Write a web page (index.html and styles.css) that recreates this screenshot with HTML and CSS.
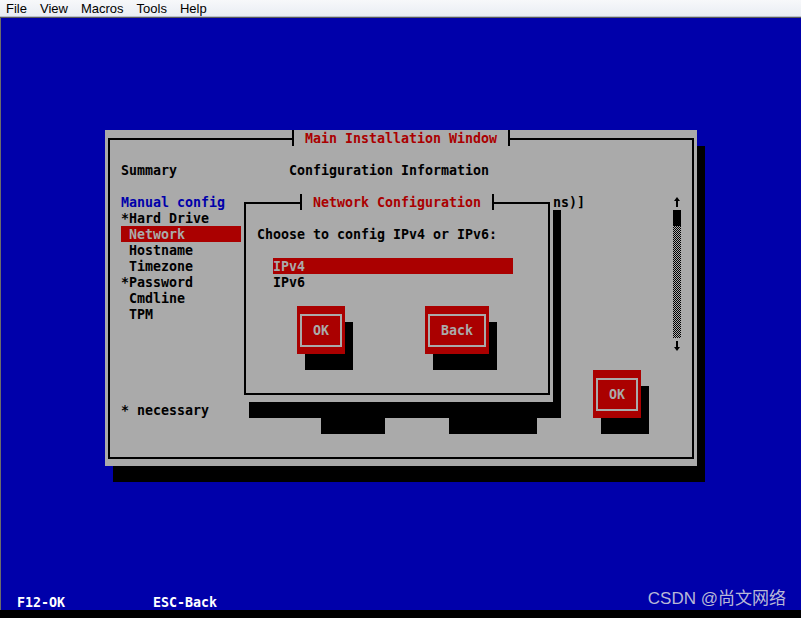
FILE: index.html
```html
<!DOCTYPE html>
<html lang="en">
<head>
    <meta charset="UTF-8">
    <meta name="viewport" content="width=device-width, initial-scale=1.0">
    <title>Main Installation Window</title>
    <link rel="stylesheet" href="styles.css">
</head>
<body>

<div class="menubar">
    <span>File</span>
    <span>View</span>
    <span>Macros</span>
    <span>Tools</span>
    <span>Help</span>
</div>

<div class="screen">
    <div class="win-shadow"></div>
    <div class="win">
        <div class="frame"></div>
        <div class="title win-title">Main Installation Window</div>

        <div class="txt summary">Summary</div>
        <div class="txt info">Configuration Information</div>

        <div class="sidebar">
            <div class="manual">Manual config</div>
            <div>*Hard Drive</div>
            <div class="sel"> Network</div>
            <div> Hostname</div>
            <div> Timezone</div>
            <div>*Password</div>
            <div> Cmdline</div>
            <div> TPM</div>
        </div>

        <div class="txt hint">ns)]</div>
        <div class="txt necessary">* necessary</div>

        <div class="scrollbar">
            <svg class="arrow" width="8" height="16" viewBox="0 0 8 16"><polygon points="4,3 7,7 1,7"/><rect x="3" y="6" width="2" height="7"/></svg>
            <div class="thumb"></div>
            <div class="track"></div>
            <svg class="arrow" width="8" height="16" viewBox="0 0 8 16"><rect x="3" y="3" width="2" height="7"/><polygon points="1,9 7,9 4,13"/></svg>
        </div>

        <!-- buttons hidden under the dialog, only their shadows show -->
        <div class="shadow hid-a"></div>
        <div class="shadow hid-b"></div>

        <div class="shadow ok-main-shadow"></div>
        <div class="btn ok-main"><span class="btn-frame">OK</span></div>
    </div>

    <div class="dlg-shadow"></div>
    <div class="dlg">
        <div class="frame"></div>
        <div class="title dlg-title">Network Configuration</div>
        <div class="txt choose">Choose to config IPv4 or IPv6:</div>
        <div class="txt opt v4">IPv4</div>
        <div class="txt opt v6">IPv6</div>

        <div class="shadow ok-shadow"></div>
        <div class="btn ok"><span class="btn-frame">OK</span></div>
        <div class="shadow back-shadow"></div>
        <div class="btn back"><span class="btn-frame">Back</span></div>
    </div>

    <div class="key f12">F12-OK</div>
    <div class="key esc">ESC-Back</div>

    <div class="watermark">CSDN @尚文网络</div>
</div>
<div class="bottom-strip"></div>

</body>
</html>
```

FILE: styles.css
```css
body {
    margin: 0;
    background-color: #6b6b6b;
    overflow: hidden;
}
.menubar {
    height: 16px;
    display: flex;
    align-items: center;
    gap: 13px;
    padding-left: 6px;
    background: linear-gradient(#f7f8fa, #e9edf3);
    border-bottom: 1px solid #b9c0cc;
    box-shadow: 0 1px 0 #5a5a5a;
    margin-bottom: 1px;
    font-family: "Liberation Sans", Arial, sans-serif;
    font-size: 13px;
    color: #000;
}

/* text console: 100 x 37 cells of 8x16 */
.screen {
    position: relative;
    margin-left: 1px;
    display: grid;
    grid-template-columns: repeat(100, 8px);
    grid-template-rows: repeat(37, 16px);
    background-color: #0000aa;
    font-family: "DejaVu Sans Mono", "Liberation Mono", monospace;
    font-size: 13.29px;
    font-weight: bold;
    line-height: 16px;
    color: #000;
}
.txt, .title, .key, .sidebar > div {
    white-space: pre;
    padding-top: 1px;
    line-height: 15px;
}
.bottom-strip {
    height: 8px;
    background-color: #000;
}

.win-shadow {
    grid-column: 15 / span 74;
    grid-row: 9 / span 21;
    background-color: #000;
}
.win {
    grid-column: 14 / span 74;
    grid-row: 8 / span 21;
    display: grid;
    grid-template-columns: repeat(74, 8px);
    grid-template-rows: repeat(21, 16px);
    background-color: #aaaaaa;
}
.frame {
    grid-area: 1 / 1 / -1 / -1;
    margin: 8px 3px 7px 3px;
    border: 2px solid #000;
}
.title {
    grid-row: 1;
    margin: 0 3px;
    padding-left: 11px;
    border-left: 2px solid #000;
    border-right: 2px solid #000;
    background-color: #aaaaaa;
    color: #aa0000;
}
.win-title { grid-column: 24 / span 28; }

.summary { grid-column: 3; grid-row: 3; }
.info { grid-column: 24; grid-row: 3; }
.hint { grid-column: 57; grid-row: 5; }
.necessary { grid-column: 3; grid-row: 18; }

.sidebar {
    grid-column: 3 / span 15;
    grid-row: 5 / span 8;
}
.sidebar .manual { color: #0000aa; }
.sidebar .sel {
    width: 120px;
    background-color: #aa0000;
    color: #aaaaaa;
}

.scrollbar {
    grid-column: 72;
    grid-row: 5 / span 10;
    display: flex;
    flex-direction: column;
}
.scrollbar .arrow {
    display: block;
    fill: #000;
}
.scrollbar .thumb {
    height: 16px;
    background-color: #000;
}
.scrollbar .track {
    height: 112px;
    background: repeating-conic-gradient(#000 0 25%, #aaaaaa 0 50%) 0 0 / 2px 2px;
}

.shadow { background-color: #000; }
.hid-a { grid-column: 28 / span 8; grid-row: 17 / span 3; }
.hid-b { grid-column: 44 / span 11; grid-row: 17 / span 3; }
.ok-main-shadow { grid-column: 63 / span 6; grid-row: 17 / span 3; }
.ok-main { grid-column: 62 / span 6; grid-row: 16 / span 3; }

.btn {
    display: flex;
    background-color: #aa0000;
    color: #aaaaaa;
}
.btn-frame {
    flex: 1;
    display: flex;
    align-items: center;
    justify-content: center;
    margin: 8px 3px 7px 3px;
    border: 2px solid #aaaaaa;
}

.dlg-shadow {
    grid-column: 32 / span 39;
    grid-row: 13 / span 13;
    background-color: #000;
}
.dlg {
    grid-column: 31 / span 39;
    grid-row: 12 / span 13;
    display: grid;
    grid-template-columns: repeat(39, 8px);
    grid-template-rows: repeat(13, 16px);
    background-color: #aaaaaa;
}
.dlg-title { grid-column: 8 / span 25; }
.choose { grid-column: 3; grid-row: 3; }
.opt { grid-column: 5 / span 30; }
.v4 {
    grid-row: 5;
    background-color: #aa0000;
    color: #aaaaaa;
}
.v6 { grid-row: 6; }
.ok { grid-column: 8 / span 6; grid-row: 8 / span 3; }
.ok-shadow { grid-column: 9 / span 6; grid-row: 9 / span 3; }
.back { grid-column: 24 / span 8; grid-row: 8 / span 3; }
.back-shadow { grid-column: 25 / span 8; grid-row: 9 / span 3; }

.key {
    grid-row: 37;
    color: #ffffff;
}
.f12 { grid-column: 3; }
.esc { grid-column: 20; }

.watermark {
    position: absolute;
    right: 15px;
    top: 572px;
    font-family: "Liberation Sans", "Noto Sans CJK SC", sans-serif;
    font-size: 17px;
    font-weight: normal;
    line-height: 17px;
    color: #b8b8d6;
}
```
